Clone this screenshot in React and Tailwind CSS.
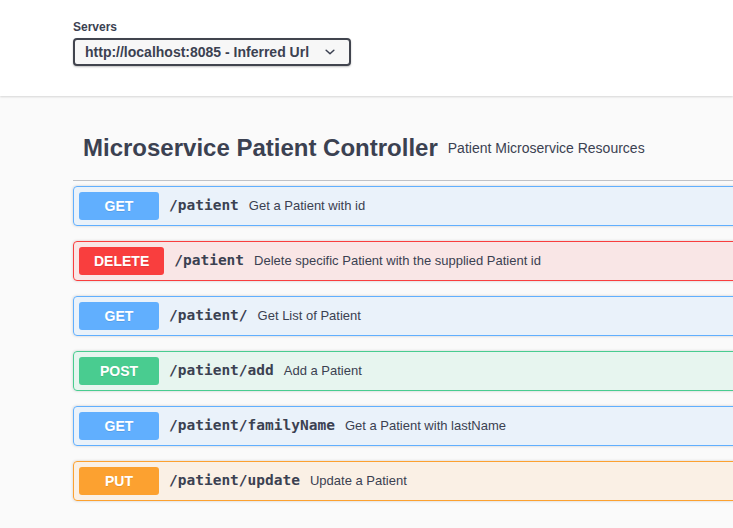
const ops = [
  { method: "GET", path: "/patient", desc: "Get a Patient with id", box: "bg-[rgba(97,175,254,0.1)] border-[#61affe]", badge: "bg-[#61affe]" },
  { method: "DELETE", path: "/patient", desc: "Delete specific Patient with the supplied Patient id", box: "bg-[rgba(249,62,62,0.1)] border-[#f93e3e]", badge: "bg-[#f93e3e]" },
  { method: "GET", path: "/patient/", desc: "Get List of Patient", box: "bg-[rgba(97,175,254,0.1)] border-[#61affe]", badge: "bg-[#61affe]" },
  { method: "POST", path: "/patient/add", desc: "Add a Patient", box: "bg-[rgba(73,204,144,0.1)] border-[#49cc90]", badge: "bg-[#49cc90]" },
  { method: "GET", path: "/patient/familyName", desc: "Get a Patient with lastName", box: "bg-[rgba(97,175,254,0.1)] border-[#61affe]", badge: "bg-[#61affe]" },
  { method: "PUT", path: "/patient/update", desc: "Update a Patient", box: "bg-[rgba(252,161,48,0.1)] border-[#fca130]", badge: "bg-[#fca130]" },
];

export default function App() {
  return (
    <div className="w-[733px] h-[528px] overflow-hidden bg-[#fafafa] text-[#3b4151] font-['Liberation_Sans',Arial,sans-serif]">
      {/* Servers */}
      <section className="bg-white h-[96px] shadow-[0_1px_2px_0_rgba(0,0,0,0.15)] pl-[73px] pt-[20px] relative">
        <div className="text-[12px] font-bold leading-[14px] mb-[4px]">Servers</div>
        <div className="inline-flex items-center h-[28px] border-2 border-[#41444e] rounded-[4px] bg-[#f7f7f7] shadow-[0_1px_2px_0_rgba(0,0,0,0.25)] pl-[10px] pr-[12px]">
          <span className="text-[14px] font-bold">http://localhost:8085 - Inferred Url</span>
          <svg className="ml-[14px]" width="14" height="14" viewBox="0 0 20 20">
            <path d="M4.5 7.5l5.5 5 5.5-5" fill="none" stroke="#3b4151" strokeWidth="2.2" strokeLinecap="round" strokeLinejoin="round" />
          </svg>
        </div>
      </section>

      {/* Tag */}
      <section className="pl-[73px] pt-[20px] w-[800px]">
        <h3 className="flex items-center h-[65px] pl-[10px] border-b border-[rgba(59,65,81,0.3)] mb-[5px]">
          <span className="text-[24px] font-bold">Microservice Patient Controller</span>
          <span className="text-[14px] px-[10px]">Patient Microservice Resources</span>
        </h3>

        {ops.map((op, i) => (
          <div key={i} className={`flex items-center h-[40px] border rounded-[4px] px-[5px] mb-[15px] shadow-[0_0_3px_rgba(0,0,0,0.19)] ${op.box}`}>
            <div className={`h-[28px] min-w-[80px] px-[15px] rounded-[3px] flex items-center justify-center text-white text-[14px] font-bold [text-shadow:0_1px_0_rgba(0,0,0,0.1)] ${op.badge}`}>
              {op.method}
            </div>
            <span className="px-[10px] text-[14.5px] font-bold font-['DejaVu_Sans_Mono',monospace]">{op.path}</span>
            <span className="text-[13px]">{op.desc}</span>
          </div>
        ))}
      </section>
    </div>
  );
}
